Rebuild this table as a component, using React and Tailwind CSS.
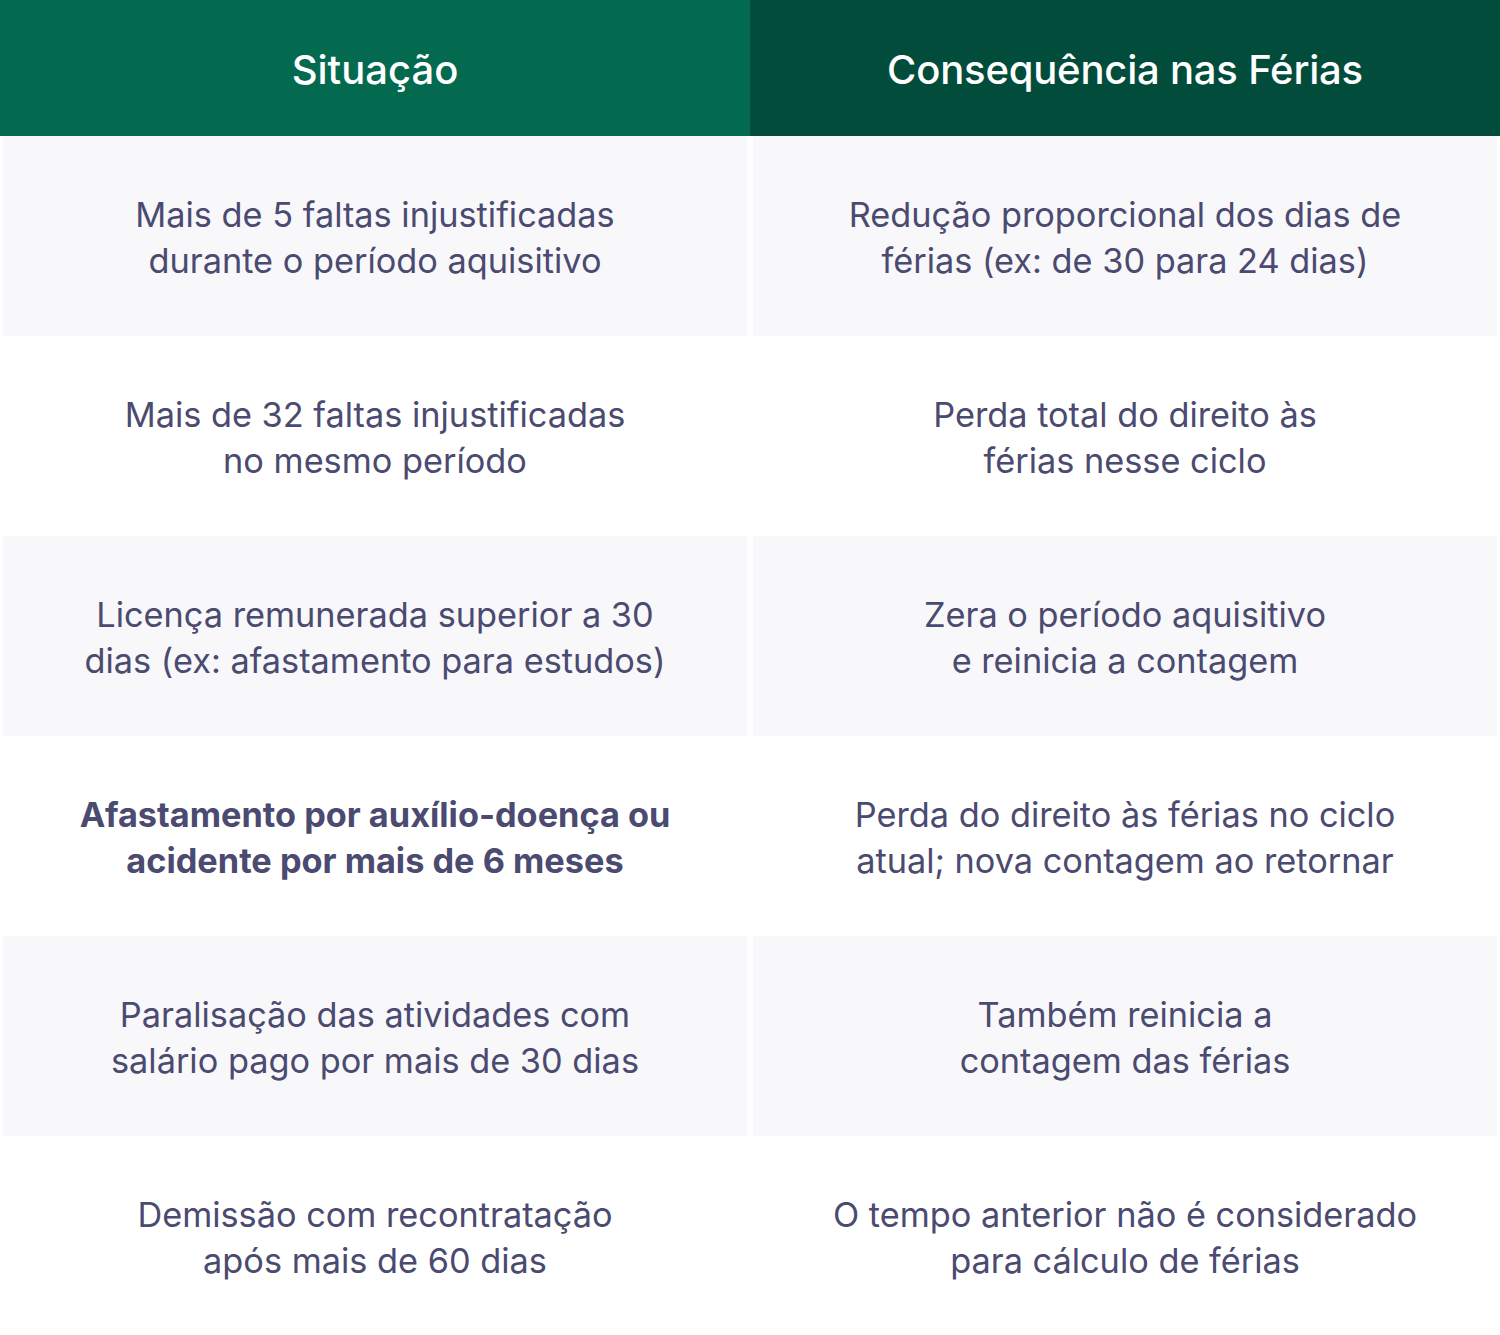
const rows = [
  ['Mais de 5 faltas injustificadas\ndurante o período aquisitivo', 'Redução proporcional dos dias de\nférias (ex: de 30 para 24 dias)'],
  ['Mais de 32 faltas injustificadas\nno mesmo período', 'Perda total do direito às\nférias nesse ciclo'],
  ['Licença remunerada superior a 30\ndias (ex: afastamento para estudos)', 'Zera o período aquisitivo\ne reinicia a contagem'],
  ['Afastamento por auxílio-doença ou\nacidente por mais de 6 meses', 'Perda do direito às férias no ciclo\natual; nova contagem ao retornar', true],
  ['Paralisação das atividades com\nsalário pago por mais de 30 dias', 'Também reinicia a\ncontagem das férias'],
  ['Demissão com recontratação\napós mais de 60 dias', 'O tempo anterior não é considerado\npara cálculo de férias'],
];

function Cell({ text, bold, gray }) {
  return (
    <div
      className={`flex h-[200px] items-center justify-center pt-[3px] whitespace-pre-line text-center text-[34.3px] leading-[46px] text-[#4b4a70] ${
        gray ? 'bg-[#f8f8fa]' : 'bg-white'
      } ${bold ? 'font-bold' : 'font-normal'}`}
    >
      {text}
    </div>
  );
}

export default function App() {
  return (
    <div className="w-[1500px] h-[1335px] bg-white font-['Inter',sans-serif]">
      {/* Header */}
      <div className="grid h-[136px] grid-cols-2 text-[40px] font-medium text-white">
        <div className="flex items-center justify-center pt-[4px] bg-[#03694f]">Situação</div>
        <div className="flex items-center justify-center pt-[4px] bg-[#024c3c] tracking-[-0.2px]">Consequência nas Férias</div>
      </div>

      {/* Rows */}
      {rows.map(([left, right, bold], i) => (
        <div key={i} className="grid grid-cols-2 gap-[6px] px-[3px]">
          <Cell text={left} bold={bold} gray={i % 2 === 0} />
          <Cell text={right} gray={i % 2 === 0} />
        </div>
      ))}
    </div>
  );
}
